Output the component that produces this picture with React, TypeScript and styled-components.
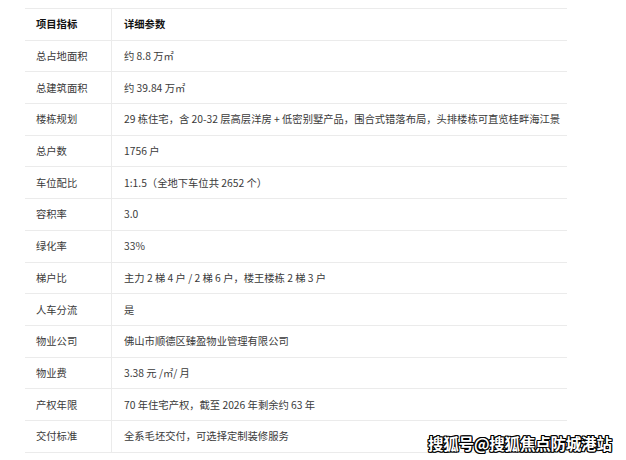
import React from "react";
import styled, { createGlobalStyle } from "styled-components";

const Global = createGlobalStyle`
  html, body { margin: 0; padding: 0; background: #fff; }
  body { font-family: "Noto Sans CJK SC", "Noto Sans", sans-serif; }
`;

const Page = styled.div`
  position: relative;
  width: 626px;
  height: 460px;
  padding: 8px 0 0 25px;
  box-sizing: border-box;
  overflow: hidden;
`;

const Table = styled.table`
  width: 542px;
  border-collapse: collapse;
  table-layout: fixed;
  font-size: 10.3px;
  color: #3a3a3a;
`;

const Row = styled.tr`
  height: 31.7px;
  border-top: 1px solid #ebebeb;
  border-bottom: 1px solid #ebebeb;
`;

const Cell = styled.td<{ $head?: boolean; $first?: boolean }>`
  padding: 0 0 0 ${(p) => (p.$first ? "11px" : "12px")};
  width: ${(p) => (p.$first ? "75px" : "auto")};
  font-weight: ${(p) => (p.$head ? 700 : 400)};
  color: ${(p) => (p.$head ? "#111" : "#3a3a3a")};
  border-right: ${(p) => (p.$first ? "1px solid #ebebeb" : "none")};
  white-space: nowrap;
  vertical-align: middle;
  line-height: 14px;
`;

const Watermark = styled.div`
  position: absolute;
  left: 428px;
  top: 432px;
  font-size: 15.5px;
  font-weight: 700;
  color: #fff;
  letter-spacing: -0.2px;
  text-shadow: 1px 0 0 #000, -1px 0 0 #000, 0 1px 0 #000, 0 -1px 0 #000,
    1px 1px 0 #000, -1px -1px 0 #000, 1px -1px 0 #000, -1px 1px 0 #000;
  white-space: nowrap;
`;

const rows: [string, string][] = [
  ["总占地面积", "约 8.8 万㎡"],
  ["总建筑面积", "约 39.84 万㎡"],
  ["楼栋规划", "29 栋住宅，含 20-32 层高层洋房 + 低密别墅产品，围合式错落布局，头排楼栋可直览桂畔海江景"],
  ["总户数", "1756 户"],
  ["车位配比", "1:1.5（全地下车位共 2652 个）"],
  ["容积率", "3.0"],
  ["绿化率", "33%"],
  ["梯户比", "主力 2 梯 4 户 / 2 梯 6 户，楼王楼栋 2 梯 3 户"],
  ["人车分流", "是"],
  ["物业公司", "佛山市顺德区臻盈物业管理有限公司"],
  ["物业费", "3.38 元 /㎡/ 月"],
  ["产权年限", "70 年住宅产权，截至 2026 年剩余约 63 年"],
  ["交付标准", "全系毛坯交付，可选择定制装修服务"],
];

export default function App() {
  return (
    <>
      <Global />
      <Page>
        <Table>
          <tbody>
            <Row>
              <Cell $first $head>项目指标</Cell>
              <Cell $head>详细参数</Cell>
            </Row>
            {rows.map(([k, v]) => (
              <Row key={k}>
                <Cell $first>{k}</Cell>
                <Cell>{v}</Cell>
              </Row>
            ))}
          </tbody>
        </Table>
        <Watermark>搜狐号@搜狐焦点防城港站</Watermark>
      </Page>
    </>
  );
}
